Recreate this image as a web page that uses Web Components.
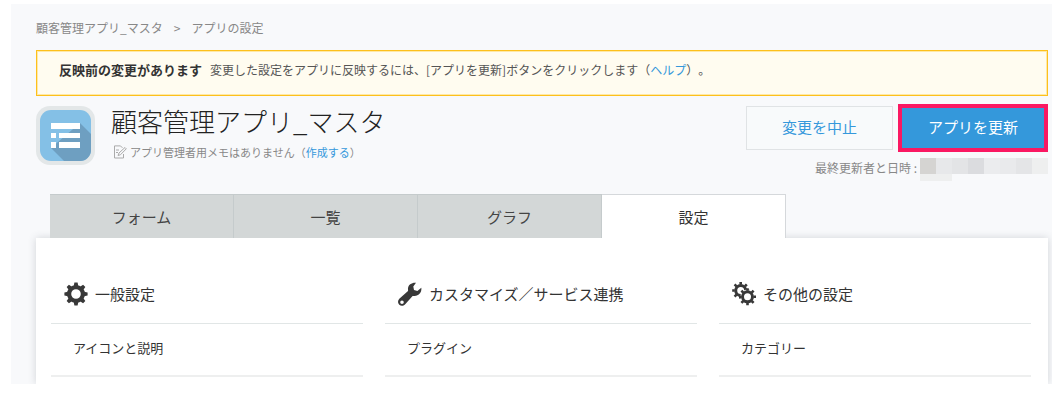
<!DOCTYPE html>
<html lang="ja">
<head>
<meta charset="utf-8">
<title>アプリの設定</title>
<style>
  body { margin: 0; background: #fff; color: #333; font: 12px/20px "Noto Sans CJK JP", sans-serif; text-spacing-trim: space-all; }
</style>
</head>
<body>
<settings-page></settings-page>

<script>
const define = (name, html) => {
  const template = document.createElement('template');
  template.innerHTML = html;
  customElements.define(name, class extends HTMLElement {
    constructor() {
      super();
      this.attachShadow({ mode: 'open' }).append(template.content.cloneNode(true));
    }
  });
};

define('bread-crumb', `
  <style>
    :host { display: block; padding: 14px 0 12px; color: #888; }
    nav { display: flex; gap: 11px; }
    a { color: inherit; text-decoration: none; }
  </style>
  <nav aria-label="パンくず"><a href="#app"><slot name="parent"></slot></a><span>&gt;</span><span><slot></slot></span></nav>
`);

define('notice-bar', `
  <style>
    :host { display: block; padding: 9px 22px 15px; border: 1px solid #fdc01c; background: #fffcf0;
      box-shadow: inset 0 0 0 1px #ffe9a6; color: #555; }
    strong { font-size: 13px; color: #333; margin-right: 8px; }
  </style>
  <strong><slot name="title"></slot></strong><slot></slot>
`);

define('app-icon', `
  <style>
    :host { display: block; }
    svg { display: block; width: 59px; height: 59px; }
  </style>
  <svg viewBox="0 0 59 59" aria-hidden="true">
    <defs><clipPath id="c"><rect x="4" y="4" width="51" height="51" rx="11"/></clipPath></defs>
    <rect width="59" height="59" rx="14" fill="#e3e7e8"/>
    <g clip-path="url(#c)">
      <rect x="4" y="4" width="51" height="51" fill="#84c0e6"/>
      <path d="M44 17 60 33V60H33L15 42Z" fill="#6e9fc1"/>
    </g>
    <path fill="#fff" d="M15 17h29v6H15zM15 27h5v5h-5zM23 27h21v5H23zM15 36h5v6h-5zM23 36h21v6H23z"/>
  </svg>
`);

define('memo-icon', `
  <style>
    :host { display: block; }
    svg { display: block; width: 14px; height: 14px; }
  </style>
  <svg viewBox="0 0 14 14" fill="none" stroke="#aaa" aria-hidden="true">
    <path d="M7.500.9H1.500V13h9V9M7.500.9l2 2"/>
    <path d="M3 5h3M3 7.500h2"/>
    <path d="M5 10.500 6 8l6-5.500 1.300 1.300L7.500 9.700Z"/>
  </svg>
`);

define('app-button', `
  <style>
    :host { display: block; }
    button { box-sizing: border-box; display: block; width: 147px; height: 44px; padding: 0 0 2px; font: inherit; font-size: 15px;
      color: #3598db; background: #f8fafb; border: 1px solid #e0e3e5; cursor: pointer; }
    :host([primary]) button { width: 150px; height: 48px; color: #fff; background: #3498db; border: 4px solid #fa1862; }
  </style>
  <button type="button"><slot></slot></button>
`);

define('masked-text', `
  <style>
    :host { display: grid; grid-template: 16px 7px / repeat(8, 16px); }
    i:nth-child(-n+2) { background: #d5d4d2; }
    i:nth-child(3) { background: #e7e8ea; }
    i:nth-child(4) { background: #e3e4e6; }
    i:nth-child(5) { background: #dbdcdf; }
    i:nth-child(6) { background: #ebecee; }
    i:nth-child(7) { background: #e9eaec; }
    i:nth-child(8) { background: #e4e5e7; }
    i:nth-child(n+9) { background: #eeefef; }
  </style>
  <i></i><i></i><i></i><i></i><i></i><i></i><i></i><i></i><i></i><i></i>
`);

define('app-header', `
  <style>
    :host { display: flex; justify-content: space-between; padding: 8px 0 13px; }
    .info { display: flex; gap: 16px; }
    app-icon { padding-top: 2px; }
    h1 { margin: 0; font-size: 26px; line-height: 34px; font-weight: 300; color: #222; }
    .memo { display: flex; align-items: center; gap: 3px; margin: 4px 0 0 2px; font-size: 11px; color: #888; }
    .side { display: flex; flex-direction: column; align-items: flex-end; gap: 6px; }
    .actions { display: flex; align-items: center; gap: 5px; }
    .updated { display: flex; gap: 3px; color: #888; }
  </style>
  <div class="info">
    <app-icon></app-icon>
    <div>
      <h1><slot name="title"></slot></h1>
      <div class="memo"><memo-icon></memo-icon><span><slot name="memo"></slot></span></div>
    </div>
  </div>
  <div class="side">
    <div class="actions"><slot name="actions"></slot></div>
    <div class="updated"><span><slot name="updated"></slot></span><masked-text></masked-text></div>
  </div>
`);

define('tab-item', `
  <style>
    :host { display: block; }
    button { box-sizing: border-box; display: block; width: 184px; height: 44px; padding: 0; border: solid #c5cbcc;
      border-width: 1px 1px 0 0; background: #d3d7d7; color: #444; font: inherit; font-size: 15px; cursor: pointer; }
    :host([selected]) button { background: #fff; border-color: #d5d8db; color: #333; }
  </style>
  <button type="button"><slot></slot></button>
`);

define('tab-bar', `
  <style>
    :host { display: flex; padding-left: 14px; position: relative; z-index: 1; }
  </style>
  <slot></slot>
`);

define('settings-panel', `
  <style>
    :host { display: grid; grid-template-columns: repeat(3, 1fr); gap: 22px; padding: 28px 17px 7px 15px; background: #fff;
      box-shadow: 0 0 8px rgba(60, 70, 80, .2); }
  </style>
  <slot></slot>
`);

define('settings-group', `
  <style>
    :host { display: block; }
    h2 { display: flex; align-items: center; gap: 7px; margin: 0; padding: 16px 0 17px 13px; border-bottom: 1px solid #e1e6e6;
      font-size: 15px; line-height: 24px; font-weight: 400; color: #333; }
    ::slotted(svg) { display: block; width: 24px; height: 24px; }
    .row { padding: 14px 22px 17px; border-bottom: 2px solid #eeefef; font-size: 13px; }
  </style>
  <h2><slot name="icon"></slot><span><slot name="title"></slot></span></h2>
  <div class="row"><slot></slot></div>
`);

define('settings-page', `
  <style>
    :host { display: block; margin: 4px 6px 0 11px; padding: 0 4px 0 25px; overflow: hidden; background: #f8f9fb; }
    .link { color: #3598db; text-decoration: none; }
    .item { color: #333; text-decoration: none; }
  </style>
  <bread-crumb><span slot="parent">顧客管理アプリ_マスタ</span>アプリの設定</bread-crumb>
  <notice-bar><span slot="title">反映前の変更があります</span>変更した設定をアプリに反映するには、[アプリを更新]ボタンをクリックします（<a class="link" href="#help">ヘルプ</a>）。</notice-bar>
  <app-header>
    <span slot="title">顧客管理アプリ_マスタ</span>
    <span slot="memo">アプリ管理者用メモはありません（<a class="link" href="#memo">作成する</a>）</span>
    <app-button slot="actions">変更を中止</app-button>
    <app-button slot="actions" primary>アプリを更新</app-button>
    <span slot="updated">最終更新者と日時 :</span>
  </app-header>
  <tab-bar>
    <tab-item>フォーム</tab-item>
    <tab-item>一覧</tab-item>
    <tab-item>グラフ</tab-item>
    <tab-item selected>設定</tab-item>
  </tab-bar>
  <settings-panel>
    <settings-group>
      <svg slot="icon" viewBox="-12 -12 24 24" aria-hidden="true">
        <circle r="6.900" fill="none" stroke="#383838" stroke-width="4.200"/>
        <g fill="#383838">
          <path id="teeth" d="M-2.300-8-1.600-11.600H1.600L2.300-8ZM-2.300 8-1.600 11.600H1.600L2.300 8ZM-8-2.300-11.600-1.600V1.600L-8 2.300ZM8-2.300 11.600-1.600V1.600L8 2.300Z"/>
          <path transform="rotate(45)" d="M-2.300-8-1.600-11.600H1.600L2.300-8ZM-2.300 8-1.600 11.600H1.600L2.300 8ZM-8-2.300-11.600-1.600V1.600L-8 2.300ZM8-2.300 11.600-1.600V1.600L8 2.300Z"/>
        </g>
      </svg>
      <span slot="title">一般設定</span>
      <a class="item" href="#icon">アイコンと説明</a>
    </settings-group>
    <settings-group>
      <svg slot="icon" viewBox="0 0 24 24" aria-hidden="true">
        <path fill="#383838" fill-rule="evenodd" d="M18 .7C14 .2 10.300 2.600 10 6.200 9.900 7.300 10.200 8.200 10 8.900L1.300 16.800C-.5 18.600-.3 21.300 1.300 22.800 2.900 24.300 5.500 24.100 7 22.400L14.600 14C15.600 13.700 17.200 14.300 18.900 13.600 22 12.600 23.900 9.400 23.300 5.800L19.400 8.900 16 8 15.300 4.500ZM4 18.400a1.800 1.800 0 1 1 0 3.600 1.800 1.800 0 0 1 0-3.600Z"/>
      </svg>
      <span slot="title">カスタマイズ／サービス連携</span>
      <a class="item" href="#plugin">プラグイン</a>
    </settings-group>
    <settings-group>
      <svg slot="icon" viewBox="0 0 24 24" aria-hidden="true">
        <g fill="none" stroke="#383838" transform="translate(8.700 8.500)">
          <circle r="5" stroke-width="3"/>
          <path stroke-width="2.600" d="M0-6V-8.500M0 6V8.500M-6 0H-8.500M6 0H8.500M-4.200-4.200-6.100-6.100M4.200-4.200 6.100-6.100M-4.200 4.200-6.100 6.100"/>
        </g>
        <circle cx="15.500" cy="14.800" r="7.300" fill="#fff"/>
        <g fill="none" stroke="#383838" transform="translate(15.500 14.800)">
          <circle r="5" stroke-width="3"/>
          <path stroke-width="2.600" d="M0-6V-8.500M0 6V8.500M-6 0H-8.500M6 0H8.500M-4.200-4.200-6.100-6.100M4.200-4.200 6.100-6.100M-4.200 4.200-6.100 6.100M4.200 4.200 6.100 6.100"/>
        </g>
      </svg>
      <span slot="title">その他の設定</span>
      <a class="item" href="#category">カテゴリー</a>
    </settings-group>
  </settings-panel>
`);
</script>
</body>
</html>
